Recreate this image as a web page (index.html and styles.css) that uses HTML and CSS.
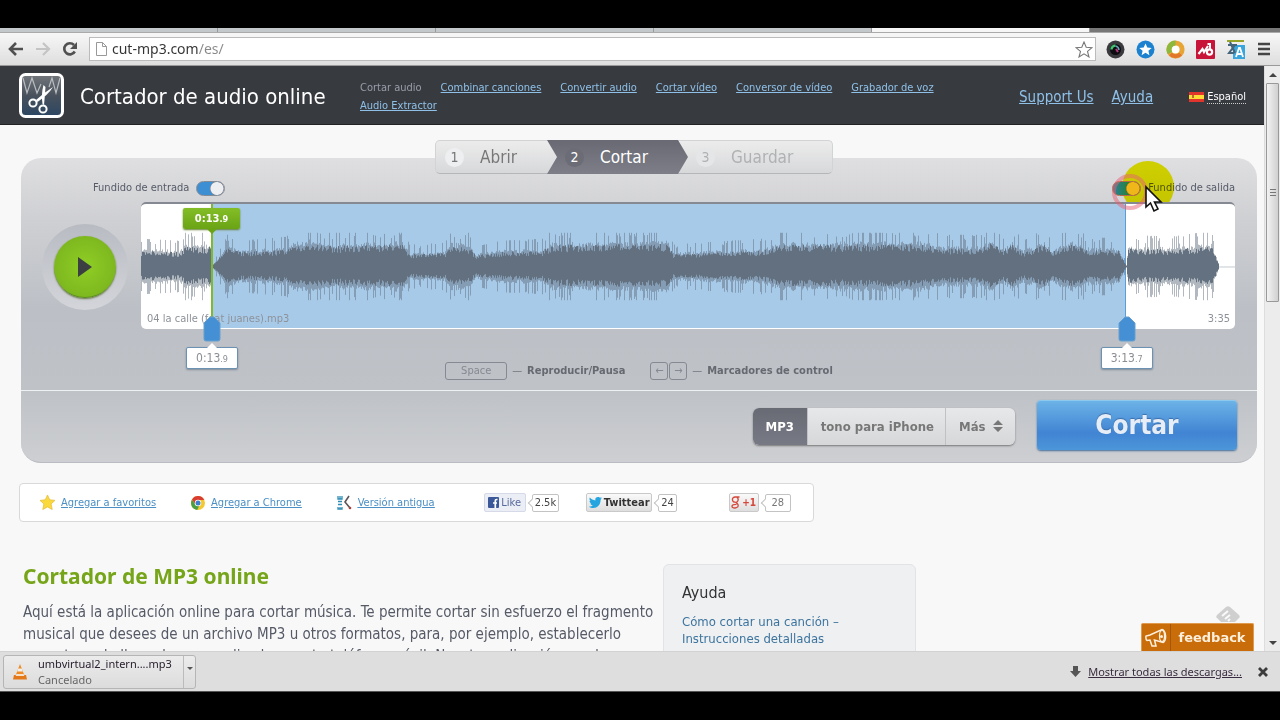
FILE: index.html
```html
<!DOCTYPE html>
<html lang="es">
<head>
<meta charset="utf-8">
<title>Cortador de audio online</title>
<link rel="stylesheet" href="styles.css">
</head>
<body>
<div class="letterbox letterbox-top"></div>

<div class="tabs"><span class="tab"></span><span class="tab"></span><span class="tab"></span><span class="tab"></span><span class="tab tab-active"></span></div>

<div class="toolbar">
  <button class="tool" aria-label="Atrás"><svg width="16" height="14" viewBox="0 0 16 14"><path d="M8 1 2 7l6 6M2 7h13" fill="none" stroke="#505050" stroke-width="2.6"/></svg></button>
  <button class="tool" aria-label="Adelante"><svg width="16" height="14" viewBox="0 0 16 14"><path d="M8 1l6 6-6 6M14 7H1" fill="none" stroke="#c4c4c4" stroke-width="2.2"/></svg></button>
  <button class="tool" aria-label="Recargar"><svg width="16" height="16" viewBox="0 0 16 16"><path d="M12.8 10.5A5.6 5.6 0 1 1 12 4" fill="none" stroke="#505050" stroke-width="2.6"/><path d="M15 1v7H8z" fill="#505050"/></svg></button>
  <div class="address">
    <svg width="11" height="14" viewBox="0 0 11 14"><path d="M.5.5h6l4 4v9H.5zM6.500 .5v4h4" fill="#fff" stroke="#999"/></svg>
    <input class="url" type="text" aria-label="Dirección" value="cut-mp3.com/es/">
    <svg width="18" height="17" viewBox="0 0 18 17"><path d="M9 1l2.200 5.300 5.800.4-4.500 3.700L14 16l-5-3.100L4 16l1.500-5.600L1 6.700l5.800-.4z" fill="#fff" stroke="#777" stroke-width="1.100"/></svg>
  </div>
  <div class="extensions">
    <svg width="19" height="19" viewBox="0 0 19 19"><circle cx="9.500" cy="9.500" r="9" fill="#3a3a3e"/><circle cx="9.500" cy="9.500" r="5.500" fill="#0c0c12"/><path d="M5.500 9.500a4 4 0 0 1 4-4" fill="none" stroke="#3fc36c" stroke-width="2.400"/><path d="M9.500 6q3 .5 3.500 4" fill="none" stroke="#6fa3b8" stroke-width="1.500"/><path d="M10 9l2 3" stroke="#b23a7a" stroke-width="2"/></svg>
    <svg width="19" height="19" viewBox="0 0 19 19"><circle cx="9.500" cy="9.500" r="9" fill="#1c82cf"/><path d="M9.500 3.500l1.800 4 4.400.4-3.300 2.900 1 4.400-3.900-2.400-3.900 2.400 1-4.400-3.300-2.900 4.400-.4z" fill="#fff"/></svg>
    <svg width="19" height="19" viewBox="0 0 19 19"><circle cx="9.500" cy="9.500" r="6.600" fill="#fff" stroke="#e7a535" stroke-width="5"/><path d="M4 13A6.600 6.600 0 0 1 9.500 3" fill="none" stroke="#8cb83d" stroke-width="5"/><path d="M4.500 14a6.600 6.600 0 0 0 10 0" fill="none" stroke="#e2762b" stroke-width="4"/></svg>
    <svg width="19" height="19" viewBox="0 0 19 19"><rect width="19" height="19" rx="1" fill="#c81438"/><path d="M2.500 14l4-5 1.500 3 4-6" fill="none" stroke="#fff" stroke-width="2.200"/><circle cx="13.500" cy="12" r="2.600" fill="none" stroke="#fff" stroke-width="2.200"/><path d="M11.500 4h2.500v6" fill="none" stroke="#fff" stroke-width="2"/></svg>
    <svg width="19" height="19" viewBox="0 0 19 19"><path d="M1 1h17" stroke="#96a52a" stroke-width="2"/><rect x="7" y="5" width="12" height="14" fill="#38a5dc"/><path d="M10 17l3-9h1l3 9M11 14h5" fill="none" stroke="#fff" stroke-width="1.800"/><path d="M2 5h9M4 2l5 11M9 5L3 13h5" fill="none" stroke="#45657c" stroke-width="2"/></svg>
    <svg class="menu-icon" width="12" height="14" viewBox="0 0 12 14"><path d="M0 2h12M0 7h12M0 12h12" stroke="#444" stroke-width="2.600"/></svg>
  </div>
</div>

<div class="viewport">
  <div class="page">
    <header class="site-header">
      <svg class="logo" width="45" height="45" viewBox="0 0 45 45"><defs><linearGradient id="lg" x2="0" y2="1"><stop offset="0" stop-color="#73777c"/><stop offset=".5" stop-color="#48515c"/><stop offset="1" stop-color="#2c4663"/></linearGradient></defs><rect x="1.500" y="1.500" width="42" height="42" rx="5" fill="url(#lg)" stroke="#fff" stroke-width="3"/><path d="M4 5l4 15 5-15 5 15 4-9M30 14l3-9 4 15 4-15" fill="none" stroke="#b9bdc1" stroke-width="1.200"/><path d="M24.500 12q-2.500 9-1 19l1.500 1q1-10 1.500-18zM34 14q-8 5-17 13l1.500 2Q29 22 34 14z" fill="#fff"/><circle cx="14" cy="30" r="3.600" fill="none" stroke="#fff" stroke-width="2"/><circle cx="24" cy="36" r="3.600" fill="none" stroke="#fff" stroke-width="2"/></svg>
      <div class="site-title">Cortador de audio online</div>
      <nav class="tools-nav">
        <span class="current">Cortar audio</span><a href="#">Combinar canciones</a><a href="#">Convertir audio</a><a href="#">Cortar vídeo</a><a href="#">Conversor de vídeo</a><a href="#">Grabador de voz</a><a href="#">Audio Extractor</a>
      </nav>
      <nav class="help-nav"><a href="#">Support Us</a><a href="#">Ayuda</a></nav>
      <a class="language" href="#"><svg width="15" height="10" viewBox="0 0 15 10"><rect width="15" height="10" fill="#e0342c"/><rect y="3" width="15" height="4" fill="#ffdc35"/><rect x="3" y="3" width="2" height="3" fill="#c26a2c"/></svg><span>Español</span></a>
    </header>

    <ol class="steps">
      <li class="step"><span class="num">1</span>Abrir</li>
      <li class="step step-active"><span class="num">2</span>Cortar</li>
      <li class="step step-next"><span class="num">3</span>Guardar</li>
    </ol>

    <section class="panel">
      <div class="editor">
        <div class="play-cell"><button class="play" aria-label="Reproducir"><svg width="14" height="20" viewBox="0 0 14 20"><path d="M0 0l14 10L0 20z" fill="#3b3f42"/></svg></button></div>
        <div class="fades">
          <label class="fade fade-in">Fundido de entrada<input class="switch" type="checkbox" role="switch" checked></label>
          <label class="fade fade-out"><span class="switch-wrap"><input class="switch switch-hot" type="checkbox" role="switch" checked></span>Fundido de salida
            <span class="pointer-glow"></span>
            <svg class="pointer" width="20" height="28" viewBox="0 0 20 28"><path d="M2 2v20l4.500-4 3.500 8 4-2-3.500-7H17z" fill="#fff" stroke="#111" stroke-width="1.600"/></svg>
          </label>
        </div>
        <div class="wave">
          <div class="selection"></div>
          <svg class="wave-svg" viewBox="0 0 1094 126" preserveAspectRatio="none"><path d="M1078 63.500h16" stroke="#c5cbd1"/><path id="spikes" stroke="#62707f" fill="none" opacity=".5"/><path id="core" stroke="#62707f" fill="none"/></svg>
          <span class="file-name">04 la calle (feat juanes).mp3</span>
          <span class="duration">3:35</span>
          <div class="marker marker-start"><span class="playhead">0:13<small>.9</small></span><svg class="handle" width="18" height="26" viewBox="0 0 18 26"><path d="M1 7l6-6h4l6 6v16q0 2-2 2H3q-2 0-2-2z" fill="#458fd5" stroke="#679fcb"/></svg><span class="time">0:13<small>.9</small></span></div>
          <div class="marker marker-end"><svg class="handle" width="18" height="26" viewBox="0 0 18 26"><path d="M1 7l6-6h4l6 6v16q0 2-2 2H3q-2 0-2-2z" fill="#458fd5" stroke="#679fcb"/></svg><span class="time">3:13<small>.7</small></span></div>
        </div>
      </div>
      <div class="hints">
        <span class="hint"><kbd class="key key-space">Space</kbd><span>—</span><b>Reproducir/Pausa</b></span>
        <span class="hint"><span class="keys"><kbd class="key">←</kbd><kbd class="key">→</kbd></span><span>—</span><b>Marcadores de control</b></span>
      </div>
      <div class="actions">
        <div class="formats">
          <button class="format format-on">MP3</button><button class="format">tono para iPhone</button><span class="more"><select class="format" aria-label="Más formatos"><option>Más</option></select><svg class="arrows" width="10" height="12" viewBox="0 0 10 12"><path d="M0 5l5-5 5 5zM0 7l5 5 5-5z" fill="#777"/></svg></span>
        </div>
        <button class="cut">Cortar</button>
      </div>
    </section>

    <div class="share">
      <a class="share-link" href="#"><svg width="15" height="15" viewBox="0 0 15 15"><path d="M7.500 0l2.200 4.800 5.300.6-3.900 3.500 1.100 5.600-4.700-2.600-4.700 2.600 1.100-5.600L0 5.400l5.300-.6z" fill="#f9d93c" stroke="#e8be40" stroke-width=".8"/></svg><span>Agregar a favoritos</span></a>
      <a class="share-link" href="#"><svg width="14" height="14" viewBox="0 0 14 14"><circle cx="7" cy="7" r="7" fill="#f4c92f"/><path d="M1 3.500a7 7 0 0 1 12.300.5H7L4 8z" fill="#d93c30"/><path d="M1 3.500L4.300 9 8 10.200 6.200 14A7 7 0 0 1 1 3.500z" fill="#4a9f45"/><circle cx="7" cy="7" r="3.200" fill="#fff"/><circle cx="7" cy="7" r="2.500" fill="#3c7fd0"/></svg><span>Agregar a Chrome</span></a>
      <a class="share-link" href="#"><svg width="15" height="15" viewBox="0 0 15 15"><path d="M1 1v3h4V1M3 1v3M1 6.500h4M1 9.500h4M1 12v2h4v-2M3 12v2" fill="none" stroke="#2d8db5" stroke-width="1.300"/><path d="M12 1L8 7l5 6" fill="none" stroke="#5c5458" stroke-width="1.600"/><circle cx="13" cy="13" r="1.300" fill="#a9433b"/></svg><span>Versión antigua</span></a>
      <div class="social social-like"><button class="badge badge-fb"><svg width="11" height="11" viewBox="0 0 11 11"><rect width="11" height="11" rx="1" fill="#3b5998"/><path d="M9.500 2.500H8.500q-1.200 0-1.200 1.300V11M5 6h4" fill="none" stroke="#fff" stroke-width="1.700"/></svg>Like</button><span class="count">2.5k</span></div>
      <div class="social social-tweet"><button class="badge badge-tw"><svg width="13" height="11" viewBox="0 0 13 11"><path d="M0 9.500c2 0 3-.4 3.700-1C2 8 1.500 7 1.400 6.500h1C1 6 .5 4.500.5 3.700l1 .3C.3 3 .3 1.500.8.600 2.500 2.400 4 3.200 6.300 3.400 6 1 7.500 0 9 0c1 0 1.600.4 2 .8l1.700-.6-1.200 1.500L13 1.300l-1.400 1.500C11.700 8 8 11 4.500 11 2.500 11 1 10.500 0 9.500z" fill="#24a5e0"/></svg>Twittear</button><span class="count">24</span></div>
      <div class="social social-plus"><button class="badge badge-gp"><svg width="9" height="13" viewBox="0 0 9 13"><path d="M8.500 1H4a2.600 2.600 0 1 0 0 5.200A2.600 2.600 0 0 0 6 1.500M5 6l2 2.500q1 3-3 3.500-3.300 0-3-2 .4-1.700 4.500-1.600" fill="none" stroke="#d5473b" stroke-width="1.300"/></svg>+1</button><span class="count count-gp">28</span></div>
    </div>

    <div class="content">
      <main class="intro">
        <h1>Cortador de MP3 online</h1>
        <p>Aquí está la aplicación online para cortar música. Te permite cortar sin esfuerzo el fragmento<br>musical que desees de un archivo MP3 u otros formatos, para, por ejemplo, establecerlo<br>como tono de llamada personalizado para tu teléfono móvil. Nuestra aplicación puede</p>
      </main>
      <aside class="help">
        <h2>Ayuda</h2>
        <a href="#">Cómo cortar una canción –<br>Instrucciones detalladas</a>
      </aside>
    </div>
  </div>

  <svg class="feedly" width="24" height="17" viewBox="0 0 24 17"><path d="M10 1q2-1.500 4 0l9 8q1.500 2 0 3l-4 4H5l-4-4q-1.500-1 0-3z" fill="#cfcfcf"/><path d="M6 10l6-5M9 13l5-4M12 15l2-2" stroke="#fafafa" stroke-width="2"/></svg>
  <button class="feedback"><span class="horn"><svg width="22" height="19" viewBox="0 0 22 19"><path d="M1 8q-.5 3 1 4.500l3-.5 2 6h4l-1.500-6 8.500 2.500c4-2 3-12-1-13L5 7z" fill="none" stroke="#fff0dc" stroke-width="1.500"/><ellipse cx="17" cy="8" rx="2.500" ry="5.500" fill="none" stroke="#fff0dc" stroke-width="1.200"/><circle cx="16.500" cy="8.500" r="1.500" fill="#fff0dc"/></svg></span><span class="feedback-text">feedback</span></button>

  <div class="scrollbar"><span class="arrow-up"></span><div class="track"><div class="thumb"><i></i><i></i><i></i></div></div><span class="arrow-down"></span></div>
</div>

<footer class="downloads">
  <div class="download">
    <svg width="14" height="16" viewBox="0 0 14 16"><path d="M7 0l5 13H2z" fill="#ef8a24"/><path d="M5.200 4.500h3.600l.9 3H4.300z" fill="#f4efe8"/><path d="M1 11h12l1 4.500H0z" fill="#e3791b"/><path d="M3.300 10h7.400l.6 2H2.700z" fill="#f4e2cc"/></svg>
    <div class="download-text"><div class="download-name">umbvirtual2_intern....mp3</div><div class="download-state">Cancelado</div></div>
    <button class="download-menu" aria-label="Opciones"><span class="caret"></span></button>
  </div>
  <div class="all-downloads">
    <svg width="11" height="12" viewBox="0 0 11 12"><path d="M3 0h5v5h3l-5.500 6L0 5h3z" fill="#555"/></svg>
    <a href="#">Mostrar todas las descargas...</a>
    <button class="close" aria-label="Cerrar"><svg width="10" height="10" viewBox="0 0 10 10"><path d="M1 1l8 8M9 1L1 9" stroke="#3c3c3c" stroke-width="2.800"/></svg></button>
  </div>
</footer>
<div class="letterbox letterbox-bottom"></div>
<script src="wave.js"></script>
</body>
</html>
```

FILE: styles.css
```css
* { box-sizing: border-box; }
body {
  margin: 0;
  height: 100vh;
  display: flex;
  flex-direction: column;
  overflow: hidden;
  background: #000;
  color: #555a66;
  font: 11px/18px "DejaVu Sans Condensed", "Noto Sans", sans-serif;
}
button, input, select { font: inherit; color: inherit; margin: 0; }
button { padding: 0; border: 0; background: none; }
svg { display: block; flex: none; }
.letterbox { height: 28px; flex: none; background: #000; }

/* Browser chrome */
.tabs { display: flex; height: 5px; flex: none; background: #777; border-bottom: 1px solid #aaa; padding-right: 190px; }
.tab { flex: 1; background: #c3c9cb; border-right: 1px solid #999; }
.tab-active { background: #f6f6f6; }
.toolbar {
  display: flex;
  align-items: center;
  gap: 11px;
  height: 33px;
  flex: none;
  padding: 0 10px 0 8px;
  background: linear-gradient(#f7f7f7, #dedede);
  border-bottom: 1px solid #999;
}
.tool { width: 16px; display: grid; place-items: center; }
.address {
  flex: 1;
  display: flex;
  align-items: center;
  gap: 5px;
  height: 24px;
  padding: 0 2px 0 6px;
  background: #fff;
  border: 1px solid #bbb;
}
.url {
  flex: 1;
  min-width: 0;
  padding: 0;
  border: 0;
  outline: 0;
  font: 14px/20px "Noto Sans", sans-serif;
  background: linear-gradient(90deg, #333 87px, #888 87px) text;
  color: transparent;
}
.extensions { display: flex; align-items: center; gap: 11px; margin-left: -1px; }
.menu-icon { margin-left: 2px; }

/* Page */
.viewport { position: relative; flex: 1; min-height: 0; display: flex; background: #f8f8f8; overflow: hidden; }
.page { flex: 1; min-width: 0; }
.site-header {
  display: flex;
  align-items: center;
  height: 59px;
  padding: 4px 18px 0 19px;
  background: #373a3f;
  border-bottom: 1px solid #222;
}
.logo { margin-bottom: 4px; }
.site-header a { color: #8fc0e8; }
.site-title { margin-left: 16px; width: 280px; color: #fff; font-size: 22px; line-height: 30px; white-space: nowrap; }
.tools-nav { flex: 1; display: flex; flex-wrap: wrap; column-gap: 19px; margin-right: 56px; }
.current { color: #9a9ca8; }
.help-nav { display: flex; gap: 18px; font-size: 15px; }
.site-header .language { display: flex; align-items: center; gap: 3px; margin-left: 36px; color: #fff; text-decoration: none; line-height: 13px; }
.language span { border-bottom: 1px dotted #ccc; }

.steps {
  position: relative;
  z-index: 1;
  display: flex;
  width: 398px;
  height: 34px;
  margin: 15px auto -16px;
  padding: 0;
  left: 2px;
  list-style: none;
  border-radius: 5px;
  background: linear-gradient(#ececec, #d7d8da);
  border: 1px solid #d2d3d5;
  border-bottom-color: #b5b6b9;
  font-size: 17px;
  line-height: 32px;
  color: #777;
}
.step { display: flex; align-items: center; gap: 16px; width: 111px; padding-left: 9px; }
.num { width: 19px; height: 19px; border-radius: 50%; background: #eeeff0; font-size: 14px; line-height: 19px; text-align: center; }
.step-active {
  width: 141px;
  height: 34px;
  margin-top: -1px;
  padding-left: 18px;
  background: linear-gradient(#686972, #7d7e87);
  color: #fff;
  clip-path: polygon(0 0, 131px 0, 100% 50%, 131px 100%, 0 100%, 10px 50%);
}
.step-active .num { background: #6b6c75; }
.step-next { color: #b0b1b3; padding-left: 8px; }
.step-next .num { background: #e5e6e7; }

.panel {
  margin: 0 7px 0 21px;
  border-radius: 20px;
  background: linear-gradient(#dfdfe1 0, #cfd0d3 60px, #bcc0c6 150px, #bfc2c7 235px, #cdcfd2 100%);
  border-bottom: 1px solid #b9bcc2;
}
.editor { display: grid; grid-template-columns: 120px 1fr; grid-template-rows: 44px 127px; padding-right: 22px; }
.play-cell { grid-row: 2; width: 86px; height: 86px; margin: 22px 0 0 21px; display: grid; place-items: center; border-radius: 50%; background: linear-gradient(#b8bbc2, #d3d5da); }
.play { width: 62px; height: 62px; display: grid; place-items: center; border-radius: 50%; background: radial-gradient(circle, #8fce25, #76ae1c); border-bottom: 1px solid #578b19; box-shadow: 0 1px 2px #647040; }
.fades { grid-column: 2; display: flex; justify-content: space-between; align-items: center; margin-left: -48px; padding-top: 16px; }
.fade { position: relative; display: flex; align-items: center; gap: 7px; }
.switch {
  appearance: none;
  display: block;
  width: 29px;
  height: 15px;
  border: 1px solid #858b95;
  border-radius: 8px;
  background: radial-gradient(circle at 20px 50%, #eceef2 6px, #77808c 7px, transparent 7px), linear-gradient(90deg, #3b8fd2 17px, #d2d4d9 17px);
}
.switch-wrap { position: relative; z-index: 1; border-radius: 50%; }
.switch-wrap::before { content: ""; position: absolute; left: 0; top: -7px; width: 28px; height: 28px; border-radius: 50%; border: 4px solid rgba(232, 95, 115, .5); }
.switch-hot { border-color: #b66a48; background: radial-gradient(circle at 20px 50%, #efb719 6px, #98700e 7px, transparent 7px), linear-gradient(90deg, #27819b, #278138 16px, #eea13c 17px); }
.pointer-glow { position: absolute; left: 10px; top: -18px; width: 52px; height: 52px; border-radius: 50%; background: #eeee00; mix-blend-mode: multiply; }
.pointer { position: absolute; left: 32px; top: 6px; z-index: 2; }

.wave { position: relative; grid-column: 2; background: #fff; border-radius: 5px; border-top: 2px solid #858991; }
.selection { position: absolute; left: 6.4%; right: 10%; top: 0; bottom: 1px; background: #a8cae9; border-right: 1px solid #5b9ddb; }
.wave-svg { position: absolute; left: 0; top: 0; width: 100%; height: 100%; }
.file-name, .duration { position: absolute; bottom: 1px; color: #8d9299; }
.file-name { left: 6px; }
.duration { right: 5px; }
.marker { position: absolute; top: 0; width: 0; height: 100%; }
.marker-start { left: 6.4%; border-left: 2px solid #7fb92d; height: 114px; }
.marker-end { left: 90.1%; }
.playhead {
  position: absolute;
  left: -30px;
  top: 4px;
  width: 57px;
  height: 21px;
  border-radius: 2px;
  background: linear-gradient(#83bd26, #6aa415);
  box-shadow: 0 1px 2px #628031;
  color: #fff;
  font-weight: bold;
  line-height: 21px;
  text-align: center;
}
.playhead::after { content: ""; position: absolute; left: 24px; top: 21px; border: 5px solid transparent; border-top-color: #6aa415; }
small { font-size: 9px; }
.handle { position: absolute; left: -9px; top: 112px; }
.marker-start .handle { left: -10px; }
.time {
  position: absolute;
  left: -26px;
  top: 143px;
  width: 52px;
  height: 22px;
  border: 1px solid #6b91b3;
  border-radius: 2px;
  background: #fff;
  box-shadow: 0 1px 2px #7f8b98;
  color: #8b8e93;
  font-size: 12px;
  line-height: 20px;
  text-align: center;
}
.marker-start .time { left: -27px; }
.time::before { content: ""; position: absolute; left: 20px; top: -10px; border: 5px solid transparent; border-bottom-color: #fff; }

.hints { display: flex; justify-content: center; gap: 25px; padding: 32px 0 10px; line-height: 19px; color: #71757c; }
.hint { display: flex; gap: 5px; align-items: center; }
.hint b { color: #666a70; }
.keys { display: flex; gap: 1px; }
.key { display: block; width: 18px; height: 18px; border: 1px solid #858991; border-radius: 3px; font: 11px/16px "DejaVu Sans Condensed", sans-serif; text-align: center; color: #858991; }
.key-space { width: 62px; }
.actions { display: flex; justify-content: flex-end; align-items: center; gap: 22px; height: 72px; padding-right: 20px; border-top: 1px solid #eff0f2; }
.formats { display: flex; height: 37px; border-radius: 6px; background: linear-gradient(#e7e8ea, #d6d7d9); box-shadow: 0 1px 2px #777; overflow: hidden; }
.format { padding: 0 11px 0 13px; font-size: 13px; font-weight: bold; color: #777; border: 0; border-right: 1px solid #c0c1c4; }
.format-on { width: 55px; padding: 0; background: linear-gradient(#686a74, #777985); color: #fff; }
.more { position: relative; display: flex; }
.more select { width: 69px; appearance: none; background: none; border: 0; }
.arrows { position: absolute; right: 12px; top: 12px; pointer-events: none; }
.cut { width: 200px; height: 50px; margin-bottom: 4px; border-radius: 4px; background: linear-gradient(#6cb3e7, #4184d3 65%, #4c96d9); border-top: 1px solid #8dc8ef; box-shadow: 0 1px 2px #456c98; color: #e6edf7; font-size: 26px; font-weight: bold; text-shadow: 0 -1px 1px #3c6ea8; }

.share { display: flex; align-items: center; width: 795px; height: 39px; margin: 20px 0 0 19px; padding-left: 20px; border: 1px solid #d9d9d9; border-radius: 4px; background: #fff; }
.share-link { display: flex; align-items: center; gap: 6px; margin-right: 35px; color: #4b8fc4; }
.share-link span { text-decoration: underline; }
.social { display: flex; align-items: center; gap: 6px; }
.social-like { margin-left: 14px; }
.social-tweet { margin-left: 27px; }
.social-plus { margin-left: 52px; }
.badge { display: flex; align-items: center; justify-content: center; gap: 2px; height: 19px; border: 1px solid #c9c9c9; border-radius: 2px; font-size: 11px; background: linear-gradient(#fafafa, #dedede); }
.badge-fb { width: 42px; background: #eceef5; border-color: #d5d9e8; color: #576a9c; }
.badge-tw { width: 66px; color: #333; font-weight: bold; }
.badge-gp { width: 30px; color: #d5473b; font-weight: bold; font-size: 10px; }
.count { position: relative; min-width: 18px; height: 18px; padding: 0 2px; border: 1px solid #c3c3c3; border-radius: 2px; font-size: 11px; line-height: 16px; text-align: center; color: #444; }
.count::before { content: ""; position: absolute; left: -4px; top: 5px; width: 5px; height: 5px; background: #fff; border: solid #c3c3c3; border-width: 0 0 1px 1px; transform: rotate(45deg); }
.count-gp { width: 26px; color: #777; }

.content { display: flex; align-items: flex-start; padding-left: 23px; }
.intro { width: 640px; flex: none; }
h1 { margin: 40px 0 0; font: bold 21px/28px "Noto Sans", sans-serif; color: #76a519; }
.intro p { margin: 11px 0 0; font-size: 15px; line-height: 22px; white-space: nowrap; }
.help { width: 253px; margin-top: 42px; padding: 18px 18px 40px; border: 1px solid #e1e3e5; border-radius: 6px; background: #eef0f2; }
.help h2 { margin: 0 0 10px; font-size: 16px; font-weight: normal; line-height: 20px; color: #333; }
.help a { display: block; font-size: 13px; line-height: 17px; color: #3d749e; text-decoration: none; white-space: nowrap; }

.feedly { position: absolute; right: 40px; bottom: 28px; }
.feedback { position: absolute; right: 26px; bottom: 0; width: 113px; height: 28px; display: flex; align-items: center; background: #c96c0a; border: 1px solid #df9a50; border-bottom: 0; border-radius: 2px 2px 0 0; color: #fff0dc; }
.horn { width: 29px; height: 27px; display: grid; place-items: center; border-right: 1px solid #a65706; }
.feedback-text { flex: 1; text-align: center; font: bold 13px/20px "DejaVu Sans", sans-serif; }

.scrollbar { width: 16px; display: flex; flex-direction: column; align-items: center; background: #ececec; border-left: 1px solid #ddd; }
.arrow-up, .arrow-down { height: 17px; display: grid; place-items: center; }
.arrow-up::before { content: ""; border: 4px solid transparent; border-bottom-color: #444; margin-top: -3px; }
.arrow-down::before { content: ""; border: 4px solid transparent; border-top-color: #444; margin-top: 4px; }
.track { flex: 1; width: 100%; padding-left: 1px; }
.thumb { height: 219px; width: 13px; display: flex; flex-direction: column; align-items: center; justify-content: center; gap: 2px; border: 1px solid #999; border-radius: 1px; background: linear-gradient(90deg, #f3f3f3, #d0d0d0); }
.thumb i { width: 6px; height: 1px; background: #777; }

/* Download shelf */
.downloads { display: flex; justify-content: space-between; align-items: flex-start; height: 41px; flex: none; padding: 3px 12px 0 3px; background: #dedede; border-bottom: 1px solid #555; border-top: 1px solid #d2d2d2; color: #333; }
.download { display: flex; align-items: center; height: 34px; padding-left: 9px; border: 1px solid #b5b5b5; border-radius: 3px; background: linear-gradient(#ececec, #dcdcdc); }
.download-text { width: 156px; padding-left: 11px; font: 11px/16px "Noto Sans", sans-serif; white-space: nowrap; }
.download-name { color: #2a2030; }
.download-state { color: #666; }
.download-menu { width: 12px; height: 32px; border-left: 1px solid #bbb; display: grid; place-items: center; }
.caret { border: 3px solid transparent; border-top-color: #555; margin-top: -4px; }
.all-downloads { display: flex; align-items: center; gap: 7px; height: 34px; font: 11px/16px "Noto Sans", sans-serif; }
.all-downloads a { color: #3a2c40; }
.close { margin-left: 9px; }
```

FILE: wave.js
```js
// Envelope points: [x, half height of the solid body]
const envelope = [
  [0, 14], [38, 13], [45, 18], [69, 17], [71, 1], [86, 16], [100, 13], [145, 15], [155, 20],
  [195, 18], [262, 20], [268, 11], [304, 12], [310, 19], [328, 17], [334, 10], [360, 13],
  [402, 14], [410, 19], [526, 20], [532, 11], [585, 13], [620, 14], [640, 19], [780, 20],
  [800, 16], [838, 16], [850, 21], [862, 14], [872, 20], [882, 13], [903, 19], [910, 13],
  [930, 20], [948, 15], [977, 14], [985, 1], [987, 16], [1030, 15], [1070, 18], [1078, 1]
];
let seed = 7;
function random() {
  seed = (seed * 16807) % 2147483647;
  return seed / 2147483647;
}
function heightAt(x) {
  let i = 1;
  while (i < envelope.length - 1 && envelope[i][0] < x) i++;
  const [x0, h0] = envelope[i - 1];
  const [x1, h1] = envelope[i];
  return h0 + (h1 - h0) * (x - x0) / (x1 - x0);
}
let core = "";
let spikes = "";
for (let x = 0; x < 1078; x++) {
  const h = heightAt(x);
  const body = h * (0.75 + random() * 0.4);
  const burst = random() > 0.78 ? 7 + random() * 10 : 0;
  const peak = Math.min(h * 2, 34, h * (1 + random() * 0.3) + burst);
  core += `M${x + 0.5} ${(63 - body).toFixed(1)}V${(63 + body * 0.9).toFixed(1)}`;
  spikes += `M${x + 0.5} ${(63 - peak).toFixed(1)}V${(63 + peak).toFixed(1)}`;
}
document.getElementById("core").setAttribute("d", core);
document.getElementById("spikes").setAttribute("d", spikes);
```
